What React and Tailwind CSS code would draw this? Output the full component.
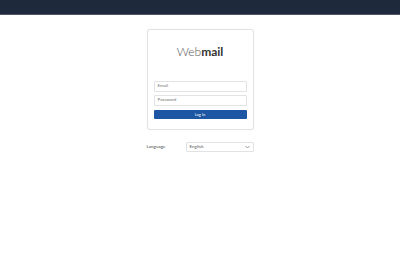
export default function App() {
  return (
    <div className="min-h-[279px] w-[400px] bg-white" style={{ fontFamily: "Lato, 'Open Sans', sans-serif" }}>
      <div className="h-[15px] bg-[#1e293b] border-b border-[#4b5563]" />
      <div className="flex flex-col items-center pt-[14px]">
        <div className="w-[107px] rounded-[3px] border border-[#e3e3e3] bg-white px-[6px] pt-[14px] pb-[10px] shadow-[0_0_2px_rgba(0,0,0,0.06)]">
          <div className="text-center text-[12px] leading-[15px] text-[#555]">
            <span className="font-light">Web</span><span className="font-bold text-[#333]">mail</span>
          </div>
          <div className="mt-[22px] flex flex-col gap-[3px]">
            <div className="flex h-[11px] items-center rounded-[1px] border border-[#e2e2e2] px-[3px] text-[4.5px] text-[#777]">Email</div>
            <div className="flex h-[11px] items-center rounded-[1px] border border-[#e2e2e2] px-[3px] text-[4.5px] text-[#777]">Password</div>
            <div className="mt-[1px] flex h-[9px] items-center justify-center rounded-[1px] bg-[#1d56a3] text-[4px] text-white">Log In</div>
          </div>
        </div>
        <div className="mt-[12px] flex w-[107px] items-center justify-between">
          <span className="text-[4.5px] text-[#444]">Language</span>
          <div className="flex h-[10px] w-[68px] items-center justify-between rounded-[1px] border border-[#e2e2e2] px-[3px] text-[4.5px] text-[#555]">
            <span>English</span>
            <svg width="5" height="4" viewBox="0 0 10 6"><path d="M1 1l4 4 4-4" fill="none" stroke="#777" strokeWidth="1.5" /></svg>
          </div>
        </div>
      </div>
    </div>
  );
}
